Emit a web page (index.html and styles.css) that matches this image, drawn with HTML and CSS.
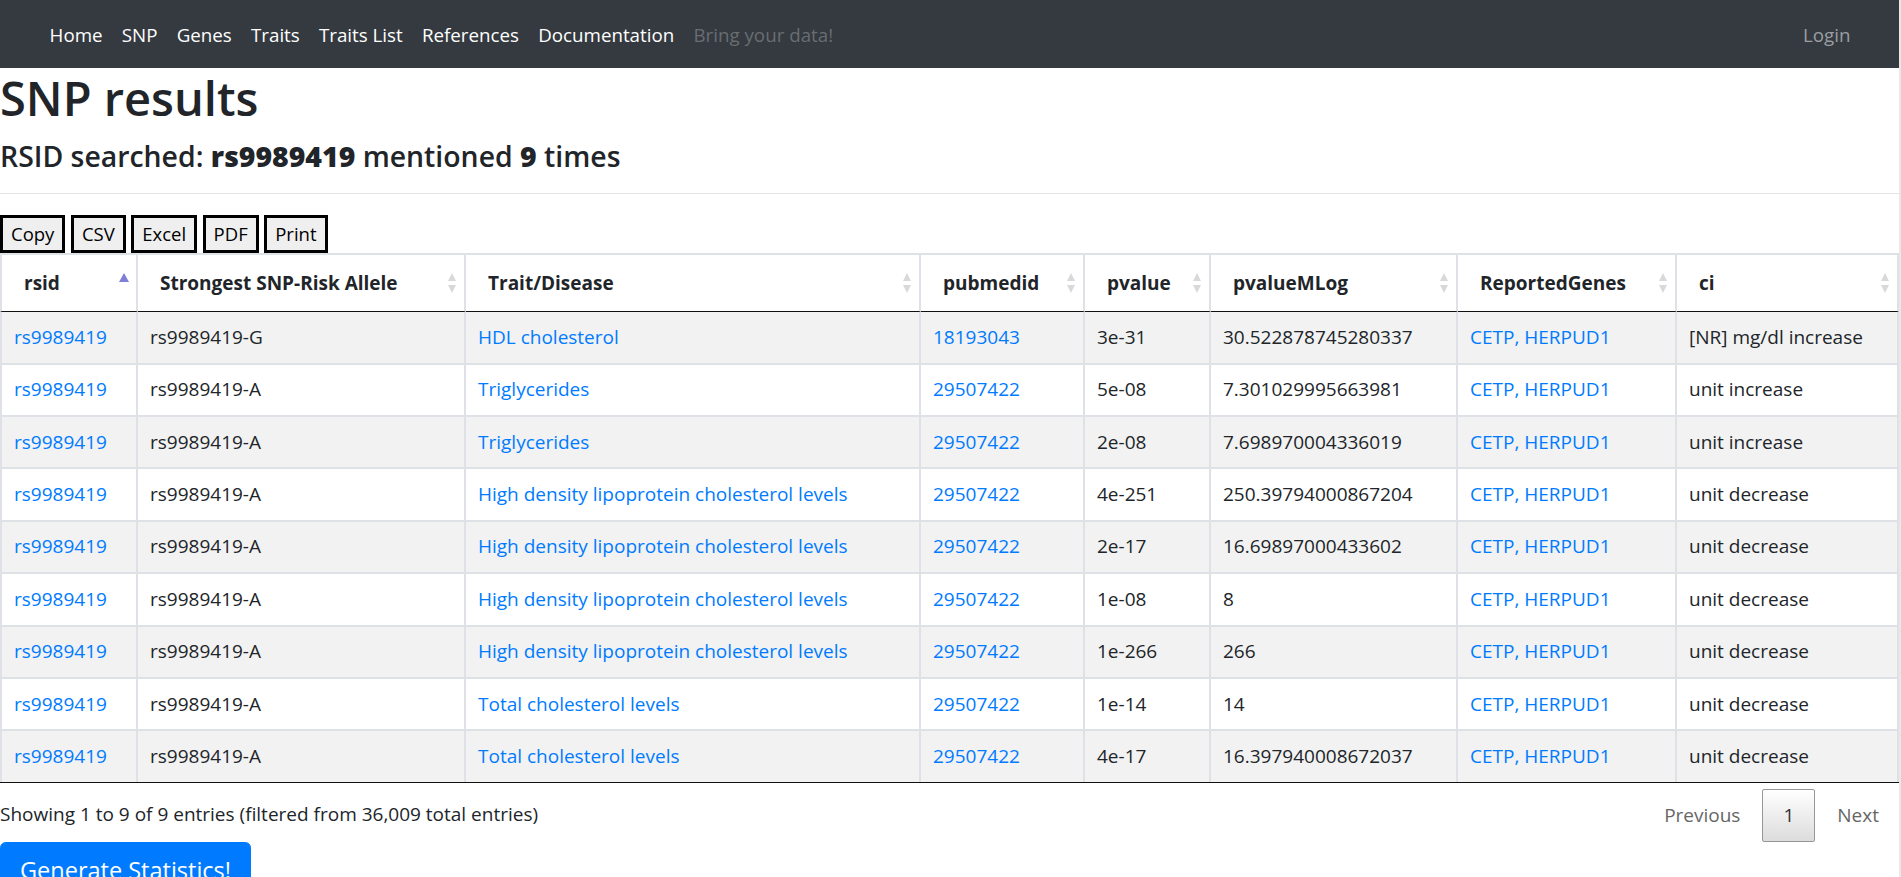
FILE: index.html
```html
<!DOCTYPE html>
<html lang="en">
<head>
<meta charset="utf-8">
<title>SNP results</title>
<link rel="stylesheet" href="styles.css">
</head>
<body>
<div class="page">
  <nav class="navbar">
    <ul class="nav-links">
      <li><a class="nav-link" href="#">Home</a></li>
      <li><a class="nav-link" href="#">SNP</a></li>
      <li><a class="nav-link" href="#">Genes</a></li>
      <li><a class="nav-link" href="#">Traits</a></li>
      <li><a class="nav-link" href="#">Traits List</a></li>
      <li><a class="nav-link" href="#">References</a></li>
      <li><a class="nav-link" href="#">Documentation</a></li>
      <li><a class="nav-link disabled" href="#">Bring your data!</a></li>
    </ul>
    <a class="nav-link login" href="#">Login</a>
  </nav>

  <main class="content">
    <h1 class="title">SNP results</h1>
    <h4 class="subtitle">RSID searched: <b>rs9989419</b> mentioned <b>9</b> times</h4>
    <hr class="divider">

    <div class="buttons">
      <button class="dt-button">Copy</button>
      <button class="dt-button">CSV</button>
      <button class="dt-button">Excel</button>
      <button class="dt-button">PDF</button>
      <button class="dt-button">Print</button>
    </div>

    <table class="data-table">
      <colgroup>
        <col class="w1"><col class="w2"><col class="w3"><col class="w4">
        <col class="w5"><col class="w6"><col class="w7"><col class="w8">
      </colgroup>
      <thead>
        <tr>
          <th>rsid<span class="sort asc"></span></th>
          <th>Strongest SNP-Risk Allele<span class="sort"></span></th>
          <th>Trait/Disease<span class="sort"></span></th>
          <th>pubmedid<span class="sort"></span></th>
          <th>pvalue<span class="sort"></span></th>
          <th>pvalueMLog<span class="sort"></span></th>
          <th>ReportedGenes<span class="sort"></span></th>
          <th>ci<span class="sort"></span></th>
        </tr>
      </thead>
      <tbody>
        <tr>
          <td><a href="#">rs9989419</a></td><td>rs9989419-G</td><td><a href="#">HDL cholesterol</a></td><td><a href="#">18193043</a></td><td>3e-31</td><td>30.522878745280337</td><td><a href="#">CETP, HERPUD1</a></td><td>[NR] mg/dl increase</td>
        </tr>
        <tr>
          <td><a href="#">rs9989419</a></td><td>rs9989419-A</td><td><a href="#">Triglycerides</a></td><td><a href="#">29507422</a></td><td>5e-08</td><td>7.301029995663981</td><td><a href="#">CETP, HERPUD1</a></td><td>unit increase</td>
        </tr>
        <tr>
          <td><a href="#">rs9989419</a></td><td>rs9989419-A</td><td><a href="#">Triglycerides</a></td><td><a href="#">29507422</a></td><td>2e-08</td><td>7.698970004336019</td><td><a href="#">CETP, HERPUD1</a></td><td>unit increase</td>
        </tr>
        <tr>
          <td><a href="#">rs9989419</a></td><td>rs9989419-A</td><td><a href="#">High density lipoprotein cholesterol levels</a></td><td><a href="#">29507422</a></td><td>4e-251</td><td>250.39794000867204</td><td><a href="#">CETP, HERPUD1</a></td><td>unit decrease</td>
        </tr>
        <tr>
          <td><a href="#">rs9989419</a></td><td>rs9989419-A</td><td><a href="#">High density lipoprotein cholesterol levels</a></td><td><a href="#">29507422</a></td><td>2e-17</td><td>16.69897000433602</td><td><a href="#">CETP, HERPUD1</a></td><td>unit decrease</td>
        </tr>
        <tr>
          <td><a href="#">rs9989419</a></td><td>rs9989419-A</td><td><a href="#">High density lipoprotein cholesterol levels</a></td><td><a href="#">29507422</a></td><td>1e-08</td><td>8</td><td><a href="#">CETP, HERPUD1</a></td><td>unit decrease</td>
        </tr>
        <tr>
          <td><a href="#">rs9989419</a></td><td>rs9989419-A</td><td><a href="#">High density lipoprotein cholesterol levels</a></td><td><a href="#">29507422</a></td><td>1e-266</td><td>266</td><td><a href="#">CETP, HERPUD1</a></td><td>unit decrease</td>
        </tr>
        <tr>
          <td><a href="#">rs9989419</a></td><td>rs9989419-A</td><td><a href="#">Total cholesterol levels</a></td><td><a href="#">29507422</a></td><td>1e-14</td><td>14</td><td><a href="#">CETP, HERPUD1</a></td><td>unit decrease</td>
        </tr>
        <tr>
          <td><a href="#">rs9989419</a></td><td>rs9989419-A</td><td><a href="#">Total cholesterol levels</a></td><td><a href="#">29507422</a></td><td>4e-17</td><td>16.397940008672037</td><td><a href="#">CETP, HERPUD1</a></td><td>unit decrease</td>
        </tr>
      </tbody>
    </table>

    <div class="table-footer">
      <div class="info">Showing 1 to 9 of 9 entries (filtered from 36,009 total entries)</div>
      <div class="paginate">
        <a class="page-btn disabled" href="#">Previous</a>
        <a class="page-btn current" href="#">1</a>
        <a class="page-btn disabled" href="#">Next</a>
      </div>
    </div>

    <button class="btn-primary">Generate Statistics!</button>
  </main>
</div>
</body>
</html>
```

FILE: styles.css
```css
html, body {
  margin: 0;
  padding: 0;
}

body {
  background: #e8e8e8;
  font-family: "Open Sans", "Noto Sans", "Liberation Sans", sans-serif;
  font-size: 19px;
  line-height: 29px;
  color: #212529;
  overflow: hidden;
}

.page {
  width: 1899px;
  min-height: 100vh;
  background: #fff;
}

a {
  color: #007bff;
  text-decoration: none;
}

/* navbar */
.navbar {
  height: 68px;
  background: #343a40;
  display: flex;
  align-items: center;
  padding: 0 39px 0 40px;
  box-sizing: border-box;
}

.nav-links {
  display: flex;
  list-style: none;
  margin: 0;
  padding: 0;
}

.nav-link {
  display: block;
  padding: 9.5px 9.6px;
  color: #fff;
  font-size: 18.75px;
  line-height: 29px;
}

.nav-link.disabled {
  color: #696d72;
}

.nav-link.login {
  margin-left: auto;
  color: #9b9ea1;
}

/* headings */
.content {
  display: block;
}

.title {
  margin: 0;
  padding-top: 2px;
  font-size: 47px;
  font-weight: 600;
  line-height: 57.6px;
}

.subtitle {
  margin: 11.3px 0 0;
  font-size: 28.4px;
  font-weight: 600;
  line-height: 34.6px;
}

.subtitle b {
  font-weight: 800;
}

.divider {
  margin: 20px 0 0;
  border: 0;
  border-top: 1.2px solid #e5e5e5;
  height: 0;
}

/* buttons */
.buttons {
  display: flex;
  gap: 5.5px;
  margin-top: 20.3px;
}

.dt-button {
  font-family: inherit;
  font-size: 18.5px;
  line-height: 28px;
  padding: 2px 8px;
  border: 3px solid #000;
  background: #efefef;
  color: #000;
  border-radius: 0;
  margin: 0;
}

/* table */
.data-table {
  width: 1899px;
  table-layout: fixed;
  border-collapse: separate;
  border-spacing: 0;
  border-bottom: 1.5px solid #111;
}

.w1 { width: 138px; }
.w2 { width: 328px; }
.w3 { width: 455px; }
.w4 { width: 164px; }
.w5 { width: 126px; }
.w6 { width: 247px; }
.w7 { width: 219px; }
.w8 { width: 222px; }

.data-table th,
.data-table td {
  text-align: left;
  border-right: 2px solid #dee2e6;
  white-space: nowrap;
  overflow: hidden;
}

.data-table th:first-child,
.data-table td:first-child {
  border-left: 2px solid #dee2e6;
}

.data-table th {
  position: relative;
  font-weight: 700;
  padding: 13.75px 22px;
  line-height: 29px;
  border-top: 2px solid #dee2e6;
  border-bottom: 1.5px solid #111;
}

.data-table td {
  padding: 10.7px 12px;
  line-height: 29px;
  border-bottom: 2px solid #dee2e6;
}

.data-table tbody tr:last-child td {
  border-bottom: 0;
}

.data-table tbody tr:nth-child(odd) td {
  background: #f2f2f2;
}

/* sort icons */
.sort {
  position: absolute;
  right: 7px;
  top: 50%;
  width: 9px;
  height: 20px;
  margin-top: -10px;
}

.sort::before,
.sort::after {
  content: "";
  position: absolute;
  left: 0;
  width: 0;
  height: 0;
  border-left: 4.5px solid transparent;
  border-right: 4.5px solid transparent;
}

.sort::before {
  top: 0;
  border-bottom: 8px solid #d9d9d9;
}

.sort::after {
  bottom: 0;
  border-top: 8px solid #d9d9d9;
}

.sort.asc {
  right: 6px;
  width: 11px;
}

.sort.asc::before {
  border-left-width: 5.5px;
  border-right-width: 5.5px;
  border-bottom: 9px solid #7f80d6;
}

.sort.asc::after {
  border-top-color: transparent;
}

/* footer */
.table-footer {
  display: flex;
  justify-content: space-between;
  align-items: flex-start;
  height: 59px;
}

.info {
  padding-top: 17.5px;
  line-height: 29px;
}

.paginate {
  display: flex;
  align-items: center;
  margin-top: 6px;
}

.page-btn {
  display: block;
  padding: 10px 19px;
  line-height: 31px;
  margin-left: 2px;
  border: 1px solid transparent;
  border-radius: 2px;
  color: #666;
}

.page-btn.current {
  color: #333;
  border-color: #979797;
  background: linear-gradient(to bottom, #fff 0%, #dcdcdc 100%);
  padding: 10px 20px;
}

.btn-primary {
  display: block;
  font-family: inherit;
  font-size: 23.5px;
  line-height: 36px;
  padding: 9.6px 19px;
  color: #fff;
  background: #007bff;
  border: 1px solid #007bff;
  border-radius: 5.76px;
}
```
